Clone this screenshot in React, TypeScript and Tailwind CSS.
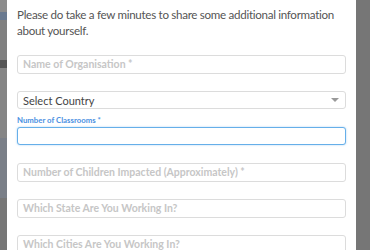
import React from "react";

const font = { fontFamily: "Lato, 'Open Sans', sans-serif" };

function Field({ placeholder }: { placeholder: string }) {
  return (
    <div className="h-[19px] rounded-[3px] border border-[#dcdcdc] bg-white px-[5px] flex items-center">
      <span className="text-[10.5px] font-bold text-[#c6c6c6] leading-none">{placeholder}</span>
    </div>
  );
}

export default function App() {
  return (
    <div className="w-[370px] h-[250px] overflow-hidden flex" style={font}>
      <div className="w-[7px] h-full bg-[#7d7d7d] flex flex-col">
        <div className="h-[12px] bg-[#8c8c8c]" />
        <div className="h-[8px] bg-[#6a7a90]" />
        <div className="h-[40px] bg-[#808080]" />
        <div className="h-[8px] bg-[#555]" />
        <div className="h-[70px] bg-[#858585]" />
        <div className="h-[60px] bg-[#7a7f88]" />
        <div className="flex-1 bg-[#777]" />
      </div>
      <div className="w-[349px] h-full bg-white px-[10px] pt-[7px]">
        <p className="text-[11.6px] leading-[16px] text-[#555] tracking-[-0.3px]">
          Please do take a few minutes to share some additional information about yourself.
        </p>
        <div className="mt-[16px]">
          <Field placeholder="Name of Organisation *" />
        </div>
        <div className="mt-[17px] h-[18px] rounded-[3px] border border-[#dcdcdc] bg-white px-[5px] flex items-center justify-between">
          <span className="text-[11px] text-[#444] leading-none">Select Country</span>
          <span className="w-0 h-0 border-l-[4px] border-r-[4px] border-t-[4px] border-l-transparent border-r-transparent border-t-[#999] mr-[1px]" />
        </div>
        <div className="mt-[6px] text-[7.8px] font-bold text-[#4a90e2] leading-[10px]">Number of Classrooms *</div>
        <div className="mt-[2px] h-[18px] rounded-[3px] border border-[#66afe9] shadow-[0_0_2px_rgba(102,175,233,0.6)] bg-white" />
        <div className="mt-[18px]">
          <Field placeholder="Number of Children Impacted (Approximately) *" />
        </div>
        <div className="mt-[17px]">
          <Field placeholder="Which State Are You Working In?" />
        </div>
        <div className="mt-[17px]">
          <Field placeholder="Which Cities Are You Working In?" />
        </div>
      </div>
      <div className="flex-1 h-full bg-[#767676]" />
    </div>
  );
}
